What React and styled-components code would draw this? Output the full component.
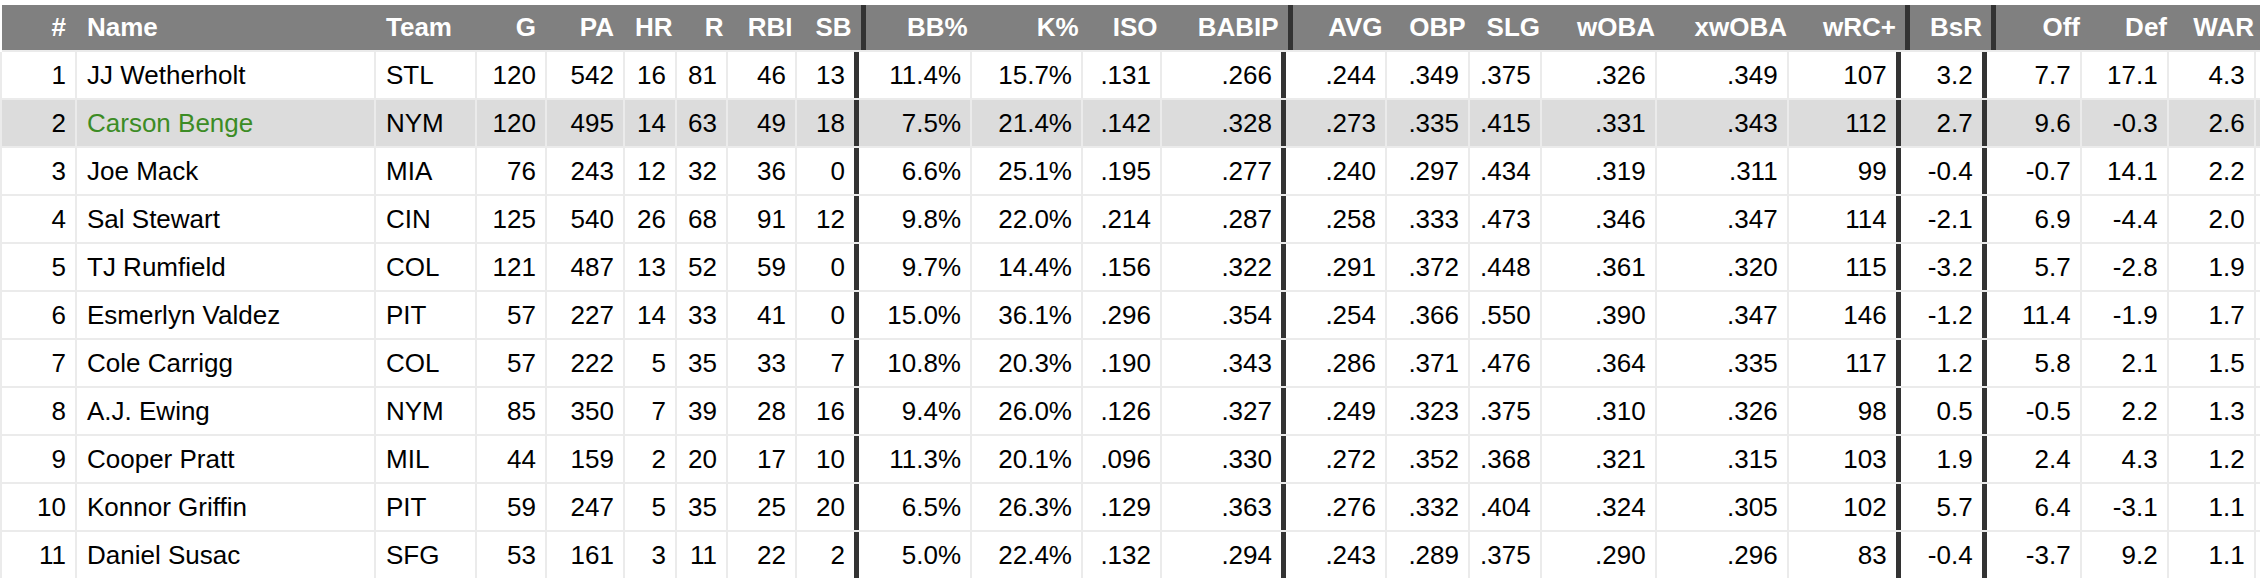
import React from 'react'
import styled, { createGlobalStyle } from 'styled-components'

const GlobalStyle = createGlobalStyle`
    html, body {
        margin: 0;
        padding: 0;
        background: #fff;
        overflow: hidden;
    }
    body {
        font-family: "Liberation Sans", Arial, Helvetica, sans-serif;
    }
`

// width includes the right border of the cell
const columns = [
    { key: 'rank', label: '#', w: 75, align: 'right' },
    { key: 'name', label: 'Name', w: 299, align: 'left' },
    { key: 'team', label: 'Team', w: 101, align: 'left' },
    { key: 'g', label: 'G', w: 70 },
    { key: 'pa', label: 'PA', w: 78 },
    { key: 'hr', label: 'HR', w: 52 },
    { key: 'r', label: 'R', w: 51 },
    { key: 'rbi', label: 'RBI', w: 69 },
    { key: 'sb', label: 'SB', w: 62, thick: true },
    { key: 'bb', label: 'BB%', w: 113 },
    { key: 'k', label: 'K%', w: 111 },
    { key: 'iso', label: 'ISO', w: 79 },
    { key: 'babip', label: 'BABIP', w: 124, thick: true },
    { key: 'avg', label: 'AVG', w: 101 },
    { key: 'obp', label: 'OBP', w: 83 },
    { key: 'slg', label: 'SLG', w: 69 },
    { key: 'woba', label: 'wOBA', w: 115 },
    { key: 'xwoba', label: 'xwOBA', w: 132 },
    { key: 'wrc', label: 'wRC+', w: 112, thick: true },
    { key: 'bsr', label: 'BsR', w: 86, thick: true },
    { key: 'off', label: 'Off', w: 95 },
    { key: 'def', label: 'Def', w: 87 },
    { key: 'war', label: 'WAR', w: 87 },
]

const raw = [
    '1|JJ Wetherholt|STL|120|542|16|81|46|13|11.4%|15.7%|.131|.266|.244|.349|.375|.326|.349|107|3.2|7.7|17.1|4.3',
    '2|Carson Benge|NYM|120|495|14|63|49|18|7.5%|21.4%|.142|.328|.273|.335|.415|.331|.343|112|2.7|9.6|-0.3|2.6',
    '3|Joe Mack|MIA|76|243|12|32|36|0|6.6%|25.1%|.195|.277|.240|.297|.434|.319|.311|99|-0.4|-0.7|14.1|2.2',
    '4|Sal Stewart|CIN|125|540|26|68|91|12|9.8%|22.0%|.214|.287|.258|.333|.473|.346|.347|114|-2.1|6.9|-4.4|2.0',
    '5|TJ Rumfield|COL|121|487|13|52|59|0|9.7%|14.4%|.156|.322|.291|.372|.448|.361|.320|115|-3.2|5.7|-2.8|1.9',
    '6|Esmerlyn Valdez|PIT|57|227|14|33|41|0|15.0%|36.1%|.296|.354|.254|.366|.550|.390|.347|146|-1.2|11.4|-1.9|1.7',
    '7|Cole Carrigg|COL|57|222|5|35|33|7|10.8%|20.3%|.190|.343|.286|.371|.476|.364|.335|117|1.2|5.8|2.1|1.5',
    '8|A.J. Ewing|NYM|85|350|7|39|28|16|9.4%|26.0%|.126|.327|.249|.323|.375|.310|.326|98|0.5|-0.5|2.2|1.3',
    '9|Cooper Pratt|MIL|44|159|2|20|17|10|11.3%|20.1%|.096|.330|.272|.352|.368|.321|.315|103|1.9|2.4|4.3|1.2',
    '10|Konnor Griffin|PIT|59|247|5|35|25|20|6.5%|26.3%|.129|.363|.276|.332|.404|.324|.305|102|5.7|6.4|-3.1|1.1',
    '11|Daniel Susac|SFG|53|161|3|11|22|2|5.0%|22.4%|.132|.294|.243|.289|.375|.290|.296|83|-0.4|-3.7|9.2|1.1',
]

const rows = raw.map(line => line.split('|'))

function App() {
    return (
        <>
            <GlobalStyle />
            <Board>
                <HeadRow>
                    {columns.map(col => (
                        <HeadCell key={col.key} $w={col.w} $align={col.align} $thick={col.thick}>
                            {col.label}
                        </HeadCell>
                    ))}
                </HeadRow>
                {rows.map((row, i) => (
                    <Row key={row[0]} $selected={i === 1}>
                        {columns.map((col, j) => (
                            <Cell key={col.key} $w={col.w} $align={col.align} $thick={col.thick}>
                                {col.key === 'name' && i === 1 ? <PlayerLink>{row[j]}</PlayerLink> : row[j]}
                            </Cell>
                        ))}
                    </Row>
                ))}
            </Board>
        </>
    )
}

export default App

const Board = styled.div`
    padding-top: 5px;
    width: 2260px;
    font-size: 26px;
    color: #000;
`

const HeadRow = styled.div`
    display: flex;
    height: 47px;
    margin-left: 2px;
    border-bottom: 2px solid #ebebeb;
    box-sizing: border-box;
`

const Row = styled.div`
    display: flex;
    height: 48px;
    box-sizing: border-box;
    border-left: 2px solid #ebebeb;
    border-bottom: 2px solid #ebebeb;
    background: ${p => (p.$selected ? '#dcdcdc' : '#fff')};
`

const Cell = styled.div`
    flex: 0 0 ${p => p.$w}px;
    box-sizing: border-box;
    display: flex;
    align-items: center;
    justify-content: ${p => (p.$align === 'left' ? 'flex-start' : 'flex-end')};
    padding: 0 9px 0 10px;
    white-space: nowrap;
    border-right: ${p => (p.$thick ? '5px solid #333' : '2px solid #ebebeb')};
`

const HeadCell = styled(Cell)`
    background: #808080;
    color: #fff;
    font-weight: bold;
    border-right: ${p => (p.$thick ? '5px solid #333' : '2px solid #808080')};
`

const PlayerLink = styled.span`
    color: #3c8c25;
`
